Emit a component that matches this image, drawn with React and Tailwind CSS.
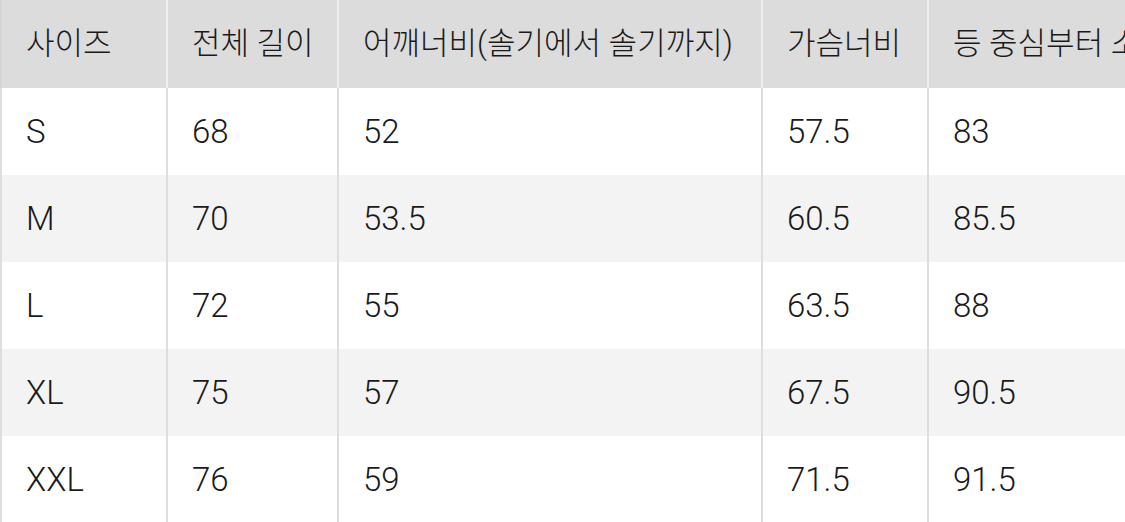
const headers = ["사이즈", "전체 길이", "어깨너비(솔기에서 솔기까지)", "가슴너비", "등 중심부터 소매 길이"];

const rows = [
  ["S", "68", "52", "57.5", "83"],
  ["M", "70", "53.5", "60.5", "85.5"],
  ["L", "72", "55", "63.5", "88"],
  ["XL", "75", "57", "67.5", "90.5"],
  ["XXL", "76", "59", "71.5", "91.5"],
];

const widths = ["w-[166px]", "w-[171px]", "w-[424px]", "w-[166px]", "w-[400px]"];

export default function App() {
  return (
    <div
      className="w-[1125px] h-[522px] overflow-hidden bg-white text-[#1a1a1a] font-light"
      style={{ fontFamily: 'Roboto, "Noto Sans CJK KR", sans-serif' }}
    >
      <table className="border-collapse table-fixed w-[1327px]">
        <thead>
          <tr className="bg-[#dcdcdc] h-[88px]">
            {headers.map((h, i) => (
              <th
                key={h}
                className={`${widths[i]} border-l-2 ${i === 0 ? "border-[#d4d4d4]" : "border-[#eeeeee]"} pl-6 text-left font-light text-[31px] whitespace-nowrap align-middle`}
              >
                {h}
              </th>
            ))}
          </tr>
        </thead>
        <tbody>
          {rows.map((r, ri) => (
            <tr key={r[0]} className={`h-[87px] ${ri % 2 === 1 ? "bg-[#f3f3f3]" : "bg-white"}`}>
              {r.map((c, ci) => (
                <td
                  key={ci}
                  className="border-l-2 border-[#dedede] pl-6 text-[33px] align-middle whitespace-nowrap"
                >
                  {c}
                </td>
              ))}
            </tr>
          ))}
        </tbody>
      </table>
    </div>
  );
}
